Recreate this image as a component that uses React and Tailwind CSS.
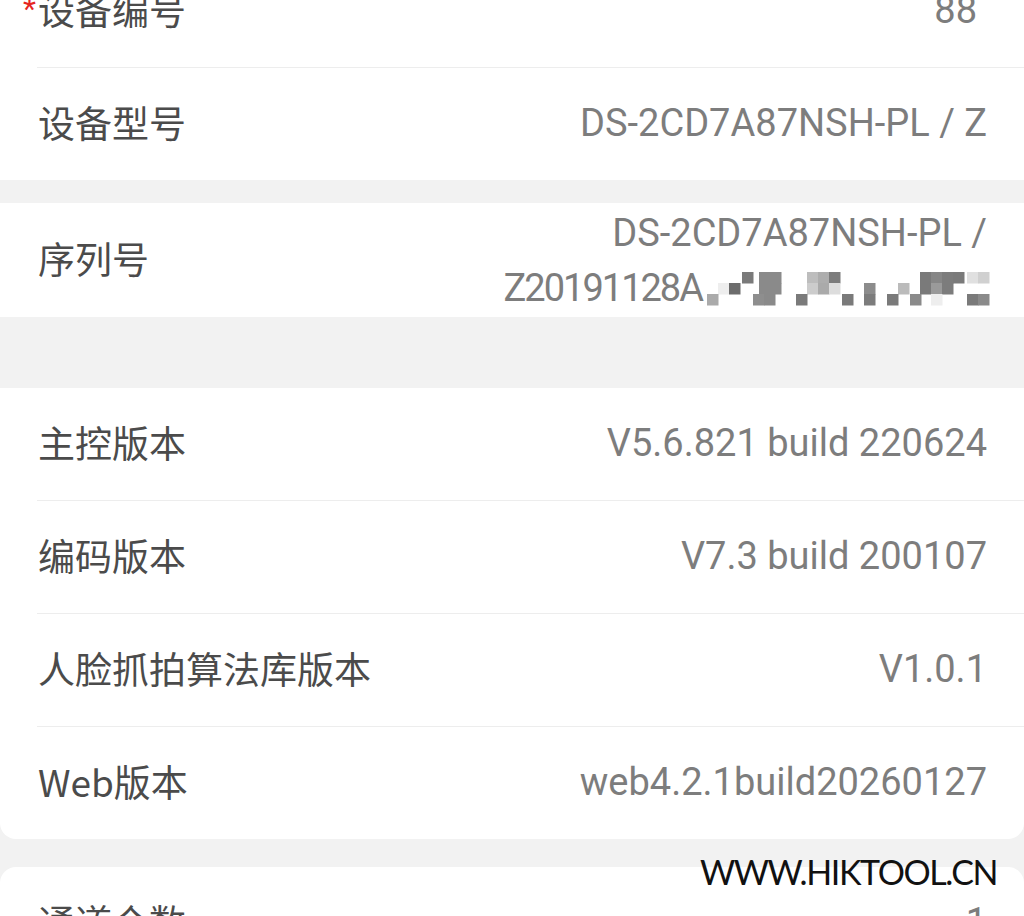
import React from "react";

const cjk = { fontFamily: "'Noto Sans CJK SC', 'Noto Sans', sans-serif" };
const num = { fontFamily: "Roboto, 'Noto Sans CJK SC', sans-serif" };

function Row(props) {
  return (
    <div className="relative flex h-[112px] flex-row items-center justify-between pl-[38px] pr-[37px]">
      <span className="relative -mt-[3px] text-[37px] leading-none text-[#4b4b4b]" style={cjk}>
        {props.required && (
          <span className="absolute -left-[15px] top-[3px] text-[30px] leading-none text-[#e5261f]" style={num}>*</span>
        )}
        {props.label}
      </span>
      <span className={"-mt-[2px] text-[38px] leading-none text-[#7d7d7d] " + (props.shift ? "mr-[10px]" : "")} style={num}>{props.value}</span>
    </div>
  );
}

function Line() {
  return <div className="ml-[37px] h-px bg-[#ededed]"></div>;
}

// pixelated (mosaic) part of the serial number
const cells = [
  [40, 0, "#7a7a7a"], [57, 0, "#8a8a8a"], [68, 0, "#8a8a8a"], [105, 0, "#bdbdbd"], [116, 0, "#adadad"], [127, 0, "#7c7c7c"],
  [218, 0, "#7a7a7a"], [229, 0, "#868686"], [240, 0, "#7c7c7c"], [251, 0, "#7a7a7a"], [265, 0, "#e0e0e0"], [276, 0, "#d0d0d0"],
  [16, 11, "#eeeeee"], [27, 11, "#6c6c6c"], [57, 11, "#8a8a8a"], [68, 11, "#8a8a8a"], [105, 11, "#cccccc"], [116, 11, "#aaaaaa"],
  [127, 11, "#dddddd"], [162, 11, "#8c8c8c"], [196, 11, "#bbbbbb"], [218, 11, "#7a7a7a"], [229, 11, "#9a9a9a"], [240, 11, "#7c7c7c"],
  [5, 22, "#aaaaaa"], [51, 22, "#8e8e8e"], [62, 22, "#8a8a8a"], [94, 22, "#7a7a7a"], [140, 22, "#7a7a7a"], [162, 22, "#7c7c7c"],
  [185, 22, "#7a7a7a"], [208, 22, "#8a8a8a"], [229, 22, "#eeeeee"], [265, 22, "#7a7a7a"], [276, 22, "#8a8a8a"],
];

function Mosaic() {
  return (
    <svg width="288" height="36" viewBox="0 0 288 36">
      {cells.map((c, i) => (
        <rect key={i} x={c[0]} y={c[1] + 2} width="11.5" height="11.5" fill={c[2]} />
      ))}
    </svg>
  );
}

export default function App() {
  return (
    <div className="relative h-[916px] w-[1024px] overflow-hidden bg-[#f2f2f2]">
      <div className="-mt-[45px] bg-white">
        <Row label="设备编号" value="88" required shift />
        <Line />
        <Row label="设备型号" value="DS-2CD7A87NSH-PL / Z" />
      </div>

      <div className="mt-[23px] flex h-[114px] flex-row items-center justify-between bg-white pl-[38px] pr-[34px]">
        <span className="-mt-[3px] text-[37px] leading-none text-[#4b4b4b]" style={cjk}>序列号</span>
        <div className="flex flex-col items-end text-[38px] leading-none text-[#7d7d7d]" style={num}>
          <div className="mr-[3px] h-[56px] pt-[10px]">DS-2CD7A87NSH-PL /</div>
          <div className="flex h-[56px] flex-row items-center">
            <span className="tracking-[-2px]">Z20191128A</span>
            <Mosaic />
          </div>
        </div>
      </div>

      <div className="mt-[71px] rounded-b-[16px] bg-white">
        <Row label="主控版本" value="V5.6.821 build 220624" />
        <Line />
        <Row label="编码版本" value="V7.3 build 200107" />
        <Line />
        <Row label="人脸抓拍算法库版本" value="V1.0.1" />
        <Line />
        <Row label="Web版本" value="web4.2.1build20260127" />
      </div>

      <div className="mt-[28px] rounded-t-[16px] bg-white">
        <Row label="通道个数" value="1" />
      </div>

      <div
        className="absolute left-[700px] top-[855px] text-[34px] leading-none tracking-[-1.4px] text-[#111111]"
        style={{ fontFamily: "Lato, sans-serif" }}
      >
        WWW.HIKTOOL.CN
      </div>
    </div>
  );
}
